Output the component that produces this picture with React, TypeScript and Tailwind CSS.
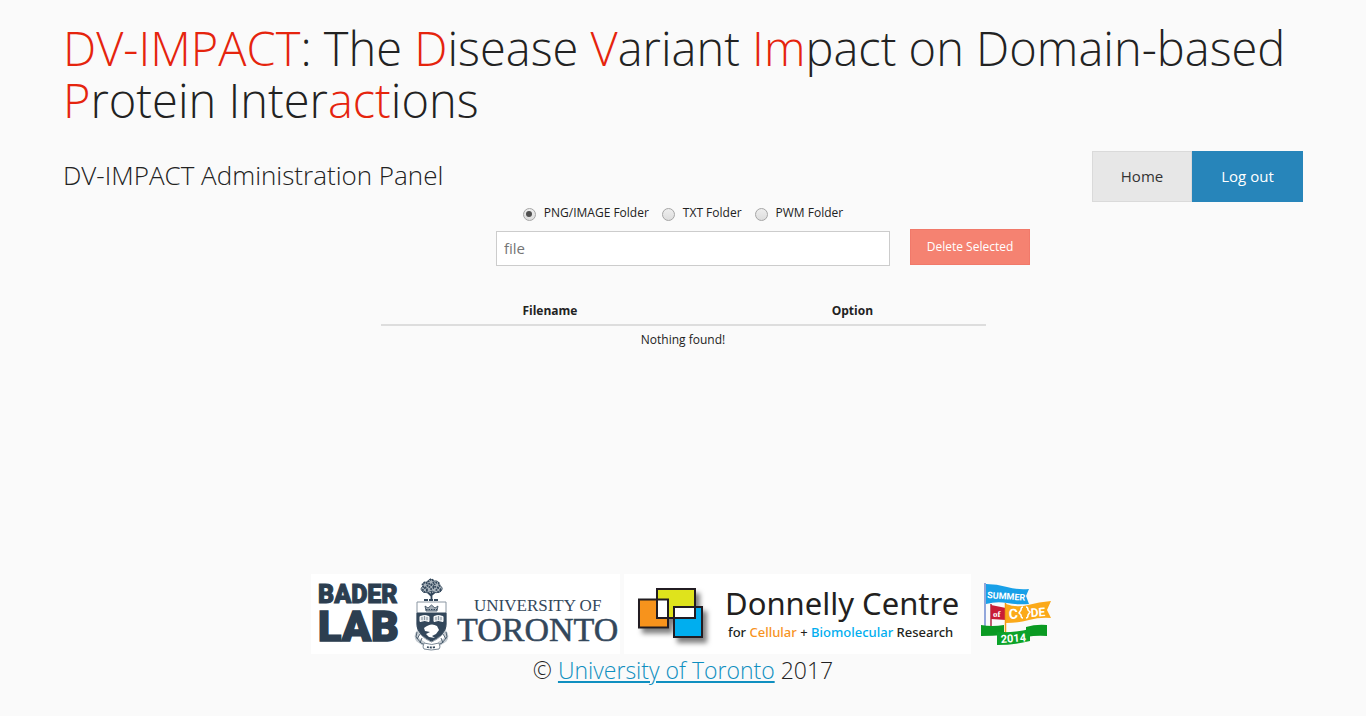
import { useState } from "react";

const folders = ["PNG/IMAGE Folder", "TXT Folder", "PWM Folder"];

function Accent({ children }: { children: string }) {
  return <span className="text-[#e5240d]">{children}</span>;
}

function TorontoLogo() {
  return (
    <svg width="309" height="80" viewBox="0 0 309 80" role="img" aria-label="Bader Lab, University of Toronto">
      <rect width="309" height="80" fill="#fff" />
      <g fill="#2c3e50" stroke="#2c3e50" fontWeight="900" fontFamily="Roboto, sans-serif">
        <text x="7" y="29" fontSize="25" strokeWidth="1">BADER</text>
        <text x="7" y="67" fontSize="43" strokeWidth="1.6">LAB</text>
      </g>
      <g stroke="#33475b" fill="none" strokeWidth="1">
        <path d="M120.500 26V16M120.500 22l-5-5M120.500 21l6-5" strokeWidth="1.8" />
        <path d="M112 18q-4-3 0-6q-1-4 4-4q3-5 7-1q5-1 5 4q6 3 1 7q-4 2-8-1q-5 3-9 1z" fill="#a9b3bc" strokeWidth=".8" />
        <g strokeDasharray="1.5 1" strokeWidth="1.8">
          <circle cx="114" cy="11" r="2.5" />
          <circle cx="120" cy="8" r="2.500" />
          <circle cx="126" cy="11" r="2.5" />
          <circle cx="114" cy="16" r="2" />
          <circle cx="120.500" cy="13" r="2" />
          <circle cx="127.500" cy="16" r="2" />
        </g>
        <path d="M113 26h15" strokeWidth="2.2" strokeDasharray="4 1" />
        <path d="M106 28h29v22c0 9-6 14-14.500 18c-8.500-4-14.500-9-14.500-18z" fill="#fff" stroke="#8a96a2" />
        <path d="M108 57q-4 5-1 9l6 4M133 57q4 5 1 9l-6 4" strokeWidth="4" stroke="#c5ccd2" />
        <path d="M106 58l-1 5 5 6 4 2M135 58l1 5-5 6-4 2M109 60l-3 5M132 60l3 5M111 64l-2 5M130 64l2 5" strokeWidth=".8" />
        <path d="M106 39h29v11c0 8-6 13-14.500 17c-8.500-4-14.500-9-14.500-17z" fill="#33475b" />
        <path d="M115 37h11l1-5-3 2-3.500-3-3.500 3-3-2z" fill="#a4adb6" strokeWidth=".8" />
        <path d="M115 35.500h11" strokeWidth="1" strokeDasharray="1.5 1" />
        <path d="M109 42.500q5-2 9 0v5q-4-2-9 0zM123 42.500q4-2 9 0v5q-5-2-9 0z" fill="#dfe4e8" stroke="#fff" />
        <path d="M111 43v3M113.500 42v4M116 43v3M125 43v3M127.500 42v4M130 43v3" strokeWidth=".5" />
        <path d="M113 54q7-6 13-2l2 4-3 4-4 2 3 2-6-1-3-3 4-2-5-1z" fill="#fff" stroke="none" />
        <path d="M113 69q8 3 15 0l1 4-1 2q-8 2-15 0l-1-2z" fill="#fff" stroke="#7b8996" />
        <path d="M116 73q4 1 9 0" strokeWidth="1.8" strokeDasharray="2 1" />
      </g>
      <g fill="#33475b" fontFamily="'Liberation Serif', serif">
        <text x="163" y="37" fontSize="17">UNIVERSITY OF</text>
        <text x="146" y="67" fontSize="34" stroke="#33475b" strokeWidth=".5">TORONTO</text>
      </g>
    </svg>
  );
}

function DonnellyLogo() {
  return (
    <svg width="347" height="80" viewBox="0 0 347 80" role="img" aria-label="Donnelly Centre for Cellular + Biomolecular Research">
      <defs>
        <filter id="donnelly-shadow" x="-20%" y="-20%" width="150%" height="150%">
          <feDropShadow dx="4" dy="5" stdDeviation="2.5" floodColor="#000" floodOpacity=".5" />
        </filter>
      </defs>
      <rect width="347" height="80" fill="#fff" />
      <g filter="url(#donnelly-shadow)" stroke="#231f20" strokeWidth="2">
        <path d="M15 25.500h29v28H15z" fill="#f7931e" />
        <path d="M33 15h38v29H33z" fill="#dfe31b" />
        <path d="M50 33h28v30H50z" fill="#00aeef" />
        <path d="M33 25.500h11V44H33zM50 33h21v11H50z" fill="#fff" />
      </g>
      <g fontFamily="'Noto Sans', sans-serif" fill="#231f20">
        <text x="101" y="41" fontSize="31">Donnelly Centre</text>
        <text x="104" y="63" fontSize="13" fontWeight="500">
          for <tspan fill="#f7931e">Cellular</tspan> + <tspan fill="#00aeef">Biomolecular</tspan> Research
        </text>
      </g>
    </svg>
  );
}

function SummerOfCodeLogo() {
  return (
    <svg width="80" height="80" viewBox="0 0 80 80" role="img" aria-label="Summer of Code 2014">
      <path d="M10 9v45" stroke="#7892d4" strokeWidth="1.6" />
      <path d="M11 10q11 0 21 3t22 2l-3 7 3 8q-12 1-22-1t-21 1z" fill="#18a0e8" />
      <path d="M16 30v24" stroke="#a71d35" strokeWidth="1.4" />
      <path d="M16 31l15 3v12l-15-1z" fill="#c91d36" />
      <path d="M30.500 29v30" stroke="#ef9b16" strokeWidth="1.5" />
      <path d="M31 30q11 4 22 1t23-4l-4 9 4 8q-11-1-22 2t-23 3z" fill="#fba919" />
      <path d="M6 51q11 2 23 0v10q-11 1-23 1zM51 53q10-3 21-2v11q-10-1-21 1z" fill="#0a9a22" />
      <path d="M22 61l8 3v-6z" fill="#06651a" />
      <path d="M22 58q16 1 33-3v12q-16 4-33 4z" fill="#0ba329" />
      <g fill="#fff" fontFamily="Roboto, sans-serif" fontWeight="700">
        <text x="12" y="24" fontSize="9" transform="rotate(4 12 24)">SUMMER</text>
        <text x="18" y="43" fontSize="9" fontFamily="'Liberation Serif', serif">of</text>
        <text x="34" y="45" fontSize="14" transform="rotate(-3 34 45)">C</text>
        <path d="M48 33q-2 0-2 3l-2 3 2 2q0 3 2 3M51 33q2 0 2 3l2 2-2 3q0 3-2 3" fill="none" stroke="#fff" strokeWidth="1.5" />
        <text x="56" y="43" fontSize="12" transform="rotate(-4 56 43)">DE</text>
        <text x="26" y="69" fontSize="11" transform="rotate(-4 26 69)">2014</text>
      </g>
    </svg>
  );
}

export default function App() {
  const [folder, setFolder] = useState(folders[0]);
  return (
    <div className="min-h-screen bg-[#fafafa] pt-[22px] pb-7 font-['Open_Sans',sans-serif] text-[#222]">
      <header className="px-[63px]">
        <h1 className="text-[47px] leading-[52px] font-light">
          <Accent>DV-IMPACT</Accent>: The <Accent>D</Accent>isease <Accent>V</Accent>ariant <Accent>Im</Accent>pact on Domain-based <Accent>P</Accent>rotein Inter<Accent>act</Accent>ions
        </h1>
        <div className="mt-[25px] flex items-start justify-between">
          <h2 className="pt-1.5 text-[26px] leading-9 font-light">DV-IMPACT Administration Panel</h2>
          <nav className="flex text-[15px]">
            <a href="#home" className="flex h-[51px] w-[100px] items-center justify-center border border-[#dadada] bg-[#e7e7e7] text-[#333]">Home</a>
            <a href="#logout" className="flex h-[51px] w-[111px] items-center justify-center bg-[#2785ba] text-white">Log out</a>
          </nav>
        </div>
      </header>

      <main>
        <fieldset aria-label="Folder" className="flex h-[22px] items-center justify-center gap-[13px] text-xs">
          {folders.map((name) => (
            <label key={name} className="flex items-center gap-2">
              <input
                type="radio"
                name="folder"
                checked={folder === name}
                onChange={() => setFolder(name)}
                className="mt-0.5 grid size-[13px] appearance-none place-items-center rounded-full border border-[#a5a5a5] bg-linear-to-b from-[#eee] to-[#ddd] before:size-[6px] before:rounded-full checked:before:bg-[#505050]"
              />
              {name}
            </label>
          ))}
        </fieldset>
        <div className="pl-40">
          <form className="mx-auto mt-[5px] flex max-w-[534px] items-start gap-5" onSubmit={(e) => e.preventDefault()}>
            <input
              aria-label="File"
              placeholder="file"
              className="mt-0.5 h-[35px] min-w-0 flex-1 border border-[#ccc] bg-white px-[7px] pb-0.5 text-[15px] placeholder:text-[#757575]"
            />
            <button type="submit" className="h-9 w-[120px] border border-[#f1796a] bg-[#f58271] text-xs text-white">Delete Selected</button>
          </form>
        </div>
        <table className="mx-auto mt-8 w-full max-w-[605px] table-fixed text-center text-xs">
          <thead>
            <tr className="h-[27px] border-b-2 border-[#ddd]">
              <th className="w-[56%] font-bold">Filename</th>
              <th className="font-bold">Option</th>
            </tr>
          </thead>
          <tbody>
            <tr className="h-[28px]">
              <td colSpan={2}>Nothing found!</td>
            </tr>
          </tbody>
        </table>
      </main>

      <footer className="mt-[221px] text-center">
        <div className="flex justify-center gap-1">
          <TorontoLogo />
          <DonnellyLogo />
          <SummerOfCodeLogo />
        </div>
        <p className="text-[23px] leading-8 font-light">
          © <a href="#university" className="text-[#0f8fc0] underline">University of Toronto</a> 2017
        </p>
      </footer>
    </div>
  );
}
